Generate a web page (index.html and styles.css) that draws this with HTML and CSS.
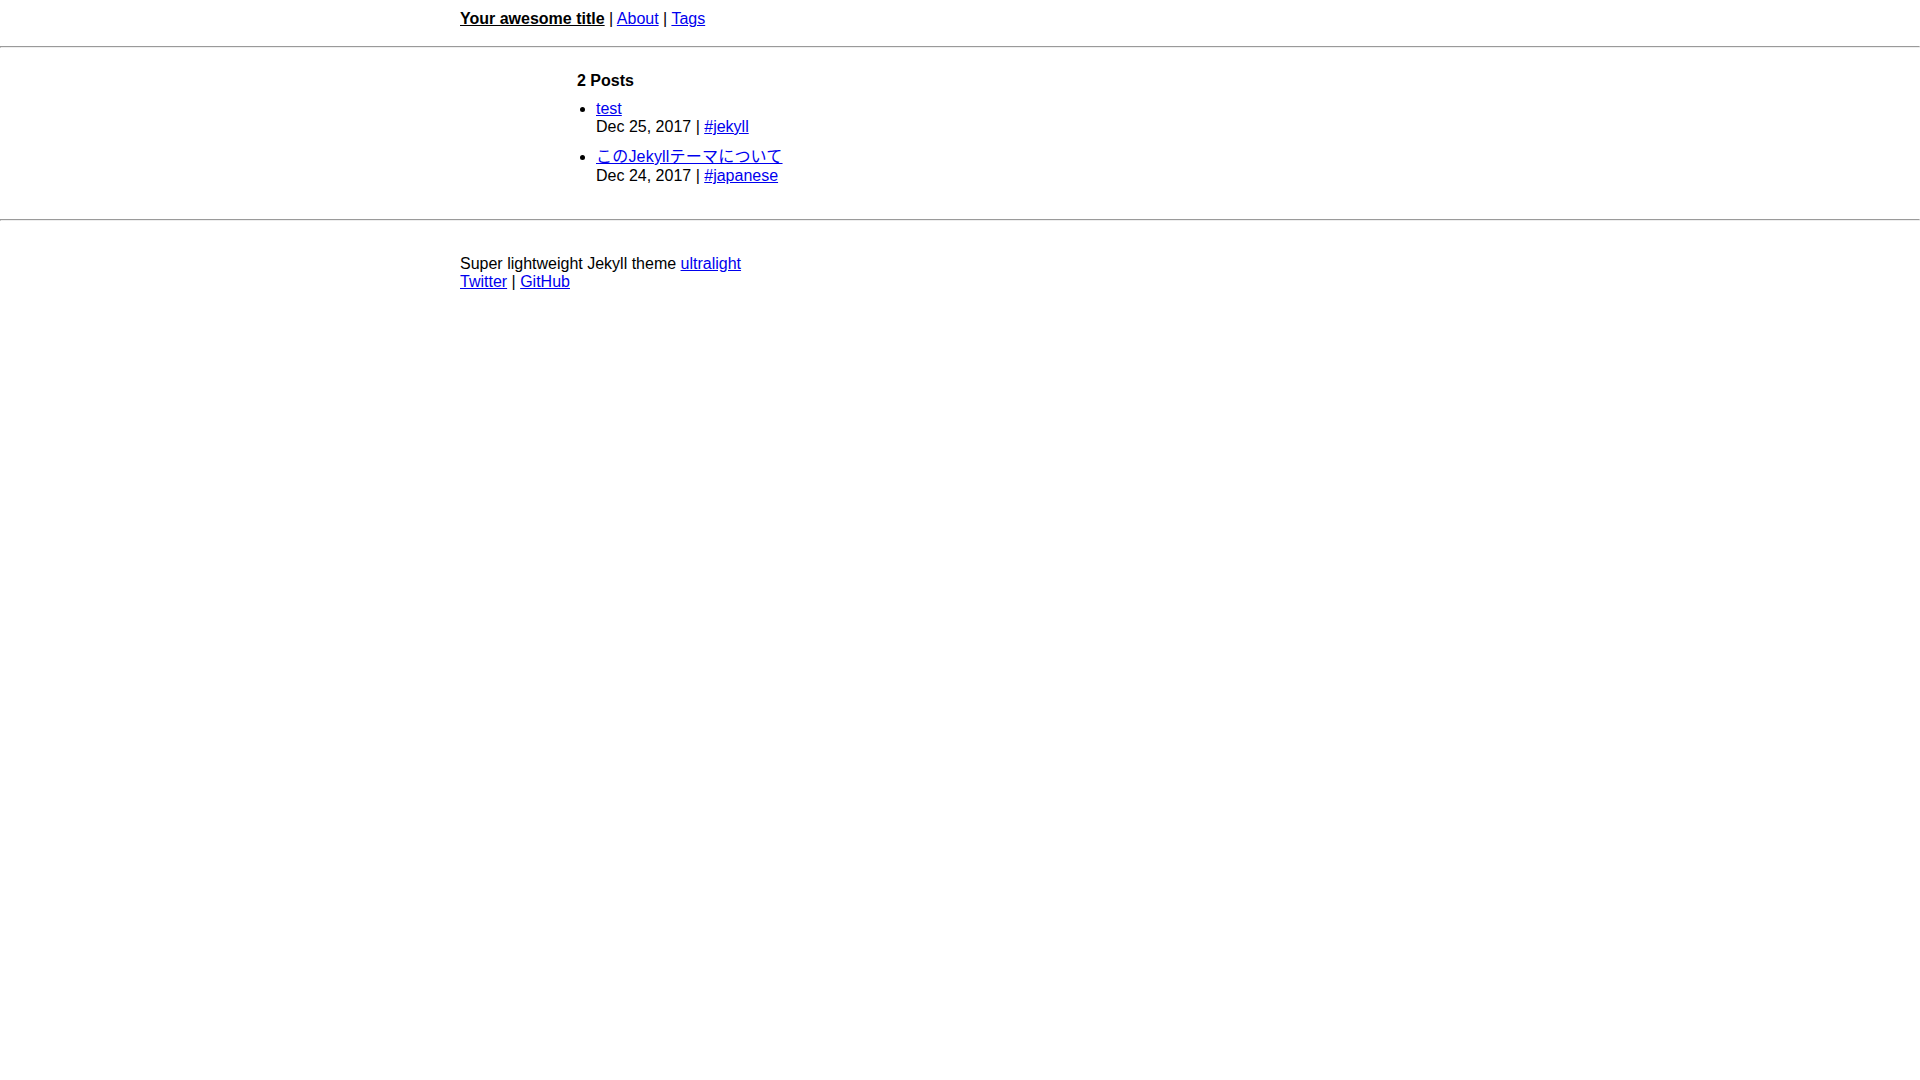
FILE: index.html
```html
<!DOCTYPE html>
<html lang="ja">
<head>
<meta charset="utf-8">
<title>Your awesome title</title>
<link rel="stylesheet" href="styles.css">
</head>
<body>
<header class="site-header">
  <div class="container">
    <a class="site-title" href="#">Your awesome title</a> | <a href="#">About</a> | <a href="#">Tags</a>
  </div>
</header>
<hr class="rule">
<main class="main">
  <div class="content">
    <h3 class="count">2 Posts</h3>
    <ul class="posts">
      <li class="post">
        <a href="#">test</a><br>
        <span class="meta">Dec 25, 2017 | <a href="#">#jekyll</a></span>
      </li>
      <li class="post">
        <a href="#" class="ja">このJekyllテーマについて</a><br>
        <span class="meta">Dec 24, 2017 | <a href="#">#japanese</a></span>
      </li>
    </ul>
  </div>
</main>
<hr class="rule">
<footer class="site-footer">
  <div class="container">
    Super lightweight Jekyll theme <a href="#">ultralight</a><br>
    <a href="#">Twitter</a> | <a href="#">GitHub</a>
  </div>
</footer>
</body>
</html>
```
FILE: styles.css
```css
html, body {
  margin: 0;
  padding: 0;
  background: #fff;
}
body {
  font-family: "Liberation Sans", Arial, "Noto Sans CJK JP", sans-serif;
  font-size: 16px;
  color: #000;
}
a {
  color: #0000ee;
}
.container {
  width: 1000px;
  margin: 0 auto;
}
.site-header {
  padding: 10px 0;
}
.site-title {
  color: #000;
  font-weight: bold;
}
.rule {
  margin: 8px 0;
}
.main {
  padding: 16px 0 19px;
}
.content {
  width: 766px;
  margin: 0 auto;
}
.count {
  font-size: 16px;
  font-weight: bold;
  margin: 0 0 10px;
}
.posts {
  margin: 0;
  padding-left: 19px;
}
.post {
  margin-bottom: 7px;
}
.ja {
  letter-spacing: 0.2px;
}
.site-footer {
  padding-top: 26px;
}
```
